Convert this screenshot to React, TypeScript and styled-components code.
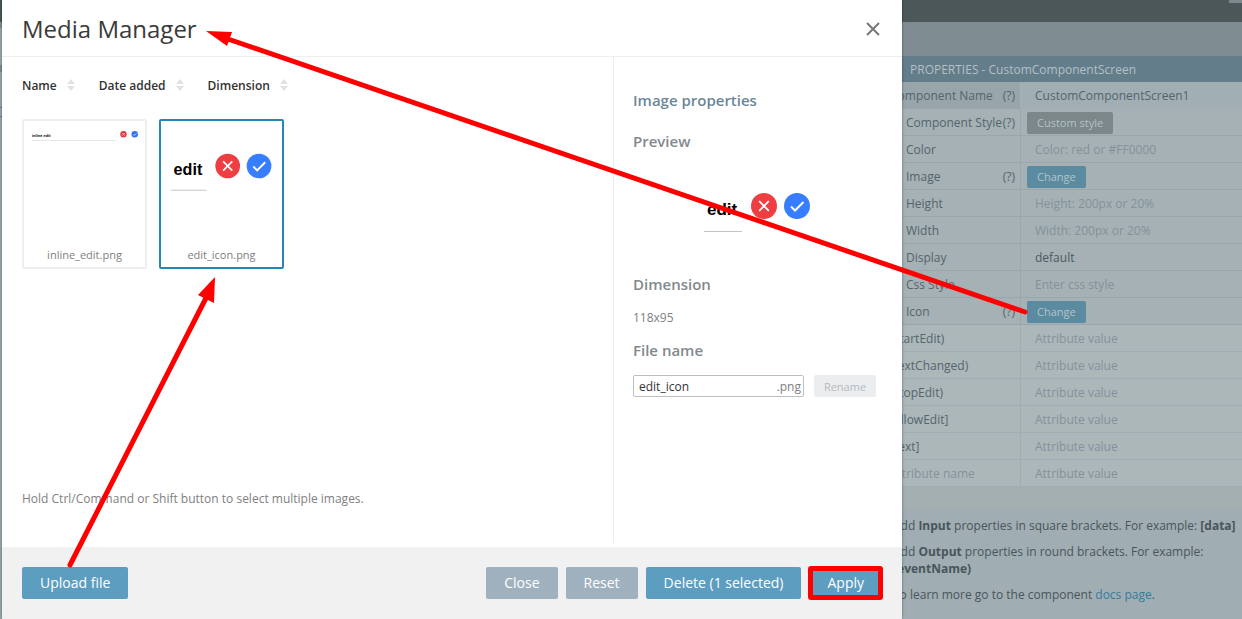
import React from "react";
import styled, { createGlobalStyle, css } from "styled-components";

const GlobalStyle = createGlobalStyle`
  *, *::before, *::after { box-sizing: border-box; }
  body {
    margin: 0;
    background: #a4afb2;
    color: #333;
    font-family: "Open Sans", "Noto Sans", sans-serif;
    font-size: 12px;
  }
  button, input, select { font-family: inherit; margin: 0; }
  h1, h2, h3, p { margin: 0; }
`;

const Page = styled.div`
  position: relative;
  display: flex;
  flex-direction: column;
  min-height: 100vh;
  overflow: hidden;
`;

const TopBar = styled.header`
  height: 22px;
  background: #4b5759;
  display: flex;
  justify-content: flex-end;
`;

const TopBarTab = styled.span`
  width: 13px;
  height: 3px;
  background: #7d898c;
`;

const Workspace = styled.div`
  flex: 1;
  display: flex;
`;

const Sidebar = styled.nav`
  width: 240px;
  padding-top: 6px;
  background: #7f8c91;
  display: flex;
  flex-direction: column;
  gap: 7px;
`;

const SidebarPanel = styled.div<{ $fill?: boolean }>`
  flex: ${(p) => (p.$fill ? "1" : "0 0 37px")};
  background: #9aa8ad;
`;

const SidebarActive = styled.div`
  height: 10px;
  margin-top: 35px;
  border: 1px solid #4f8199;
  border-width: 1px 0;
`;

const Stage = styled.main`
  flex: 1;
  display: flex;
  flex-direction: column;
`;

const SubBar = styled.div`
  height: 34px;
  background: #7f8c91;
`;

const Inspector = styled.aside`
  flex: 1;
  display: flex;
  flex-direction: column;
  width: 362px;
  margin-left: auto;
`;

const InspectorTitle = styled.h2`
  height: 26px;
  padding-left: 30px;
  background: #647d8b;
  color: #b3c0c5;
  font-size: 12px;
  font-weight: 400;
  line-height: 28px;
`;

const PropertyTable = styled.table`
  width: 100%;
  border-collapse: separate;
  border-spacing: 0;
  table-layout: fixed;
  background: #a5b1b4;
  color: #53656c;
  font-size: 12px;
`;

const NameCell = styled.th<{ $indent: number }>`
  width: 141px;
  padding: 2px 5px 0 ${(p) => p.$indent}px;
  border-right: 1px solid #99a7ac;
  border-bottom: 1px solid #99a7ac;
  font-weight: 400;
  text-align: left;
`;

const ValueCell = styled.td`
  padding: 0 6px;
  border-bottom: 1px solid #99a7ac;
`;

const PropertyRow = styled.tr<{ $tone?: "head" | "custom" }>`
  height: 27px;
  ${(p) =>
    p.$tone === "head" &&
    css`
      background: #a1aeb3;
      ${NameCell} { background: #98a6ab; border-color: #a5b1b4; border-bottom-color: #98a6ab; }
      ${ValueCell} { border-color: #a1aeb3; }
    `}
  ${(p) =>
    p.$tone === "custom" &&
    css`
      background: #acb7ba;
      ${NameCell}, ${ValueCell} { border-color: #a1adb1; }
    `}
`;

const NameLine = styled.div<{ $muted?: boolean }>`
  display: flex;
  justify-content: space-between;
  line-height: 20px;
  white-space: nowrap;
  color: ${(p) => (p.$muted ? "#83929a" : "inherit")};
`;

const ValueInput = styled.input`
  display: block;
  width: 100%;
  height: 20px;
  padding: 0 8px;
  border: 0;
  outline: 0;
  background: transparent;
  color: #53656c;
  font-size: 12px;
  &::placeholder { color: #83929a; opacity: 1; }
`;

const ValueSelect = styled.select`
  display: block;
  width: 100%;
  height: 20px;
  padding: 0 8px;
  border: 0;
  appearance: none;
  background: transparent;
  color: #4a5a60;
  font-size: 12px;
`;

const SmallButton = styled.button<{ $grey?: boolean }>`
  display: block;
  height: 22px;
  margin-top: 2px;
  padding: 0 10px;
  border: 0;
  border-radius: 2px;
  background: ${(p) => (p.$grey ? "#7b8789" : "#5a8ba0")};
  color: #b5c3c8;
  font-size: 11px;
  line-height: 22px;
`;

const Notes = styled.div`
  flex: 1;
  display: flex;
  flex-direction: column;
  gap: 9px;
  margin-top: 20px;
  padding: 10px 0 0 13px;
  background: #a0adb2;
  color: #48565c;
  font-size: 12px;
  line-height: 17px;
`;

const DocsLink = styled.a`
  color: #377b9e;
  text-decoration: none;
`;

const Modal = styled.section`
  position: absolute;
  top: 0;
  bottom: 0;
  left: 2px;
  right: 340px;
  display: flex;
  flex-direction: column;
  background: #fff;
  border-radius: 0 0 2px 2px;
  box-shadow: 0 0 3px rgba(0, 0, 0, 0.4);
`;

const ModalHeader = styled.header`
  display: flex;
  align-items: center;
  justify-content: space-between;
  height: 57px;
  padding: 2px 22px 0 20px;
  border-bottom: 1px solid #eee;
`;

const ModalTitle = styled.h1`
  padding-bottom: 2px;
  color: #3a3a3a;
  font-size: 24px;
  font-weight: 400;
`;

const CloseIconButton = styled.button`
  display: flex;
  padding: 0;
  border: 0;
  background: none;
  color: #777;
`;

const ModalBody = styled.div`
  flex: 1;
  display: flex;
  padding-bottom: 4px;
`;

const Gallery = styled.div`
  flex: 1;
  display: flex;
  flex-direction: column;
  padding: 17px 20px 34px;
`;

const SortBar = styled.div`
  display: flex;
  gap: 24px;
`;

const SortButton = styled.button`
  display: flex;
  align-items: center;
  gap: 10px;
  height: 22px;
  padding: 0;
  border: 0;
  background: none;
  color: #333;
  font-size: 12px;
  font-weight: 600;
`;

const Files = styled.div`
  display: flex;
  gap: 12px;
  margin-top: 23px;
`;

const FileCard = styled.button<{ $selected?: boolean }>`
  display: flex;
  flex-direction: column;
  justify-content: space-between;
  align-items: center;
  width: 125px;
  height: 150px;
  padding: 0 0 4px;
  border: 2px solid ${(p) => (p.$selected ? "#2488b4" : "#eee")};
  border-radius: 2px;
  background: #fff;
  color: #808080;
  font-size: 11px;
  line-height: 16px;
`;

const Hint = styled.p`
  margin-top: auto;
  color: #808080;
  font-size: 12px;
  line-height: 20px;
`;

const Details = styled.div`
  width: 289px;
  padding: 33px 26px 0 19px;
  border-left: 1px solid #eee;
`;

const DetailsTitle = styled.h2`
  color: #6c8796;
  font-size: 15px;
  font-weight: 600;
  line-height: 20px;
`;

const DetailsHeading = styled.h3<{ $gap: number }>`
  margin-top: ${(p) => p.$gap}px;
  color: #82898d;
  font-size: 15px;
  font-weight: 600;
  line-height: 20px;
`;

const Preview = styled.div`
  display: flex;
  justify-content: center;
  height: 105px;
  margin-top: 18px;
  padding-left: 6px;
`;

const DimensionText = styled.p`
  margin-top: 14px;
  color: #808080;
  font-size: 12px;
  line-height: 20px;
`;

const RenameForm = styled.form`
  display: flex;
  gap: 10px;
  margin-top: 15px;
`;

const FileNameField = styled.label`
  display: flex;
  align-items: center;
  flex: 1;
  min-width: 0;
  height: 22px;
  padding: 0 2px 0 5px;
  border: 1px solid #b9c0c4;
  border-radius: 2px;
  color: #808080;
  font-size: 12px;
`;

const FileNameInput = styled.input`
  flex: 1;
  min-width: 0;
  height: 20px;
  padding: 0;
  border: 0;
  outline: 0;
  background: transparent;
  color: #333;
  font-size: 12px;
`;

const RenameButton = styled.button`
  flex: none;
  width: 62px;
  height: 22px;
  padding: 0;
  border: 0;
  border-radius: 2px;
  background: #ebedef;
  color: #b4bbc1;
  font-size: 11px;
`;

const ModalFooter = styled.footer`
  display: flex;
  gap: 8px;
  height: 72px;
  padding: 20px 20px 0;
  background: #f1f1f1;
`;

const FooterButton = styled.button<{ $muted?: boolean; $first?: boolean; $marked?: boolean }>`
  height: 32px;
  margin-right: ${(p) => (p.$first ? "auto" : "0")};
  padding: 0 18px;
  border: 0;
  border-radius: 2px;
  background: ${(p) => (p.$muted ? "#9fb1bf" : "#5c9dc0")};
  color: #fff;
  font-size: 14px;
  line-height: 32px;
  white-space: nowrap;
  ${(p) =>
    p.$marked &&
    css`
      outline: 5px solid #fe0000;
      outline-offset: -4px;
    `}
`;

const Arrows = styled.svg`
  position: absolute;
  top: 0;
  left: 0;
  pointer-events: none;
`;

const SortIcon = () => (
  <svg width="8" height="12" viewBox="0 0 8 12" aria-hidden="true">
    <path d="M0 5 L4 0 L8 5 Z M0 7 L4 12 L8 7 Z" fill="#e2e2e2" />
  </svg>
);

const EditDrawing = ({ width, height }: { width: number; height: number }) => (
  <svg width={width} height={height} viewBox="0 0 118 95" role="img" aria-label="edit icon">
    <text x="8" y="46" fontFamily="Liberation Sans, sans-serif" fontWeight="700" fontSize="17" fill="#000">
      edit
    </text>
    <path d="M5 62.5 H43" stroke="#c4c4c4" />
    <circle cx="65" cy="37" r="13" fill="#ee3e41" />
    <path d="M60.2 32.2 L69.8 41.8 M69.8 32.2 L60.2 41.8" stroke="#fff" strokeWidth="1.8" />
    <circle cx="98" cy="37" r="13" fill="#377dff" />
    <path d="M92 37.5 L96 41.5 L104.5 33" stroke="#fff" strokeWidth="2" fill="none" />
  </svg>
);

const InlineEditDrawing = () => (
  <svg width="121" height="40" viewBox="0 0 121 40" role="img" aria-label="inline edit">
    <text x="8" y="16" fontFamily="Liberation Sans, sans-serif" fontWeight="700" fontSize="4" fill="#000">
      inline edit
    </text>
    <path d="M8 19.5 H92" stroke="#e6e6e6" />
    <circle cx="99.5" cy="13.3" r="3.2" fill="#e23a3d" />
    <path d="M98.3 12.1 L100.7 14.5 M100.7 12.1 L98.3 14.5" stroke="#fff" strokeWidth="0.7" />
    <circle cx="110.7" cy="13.3" r="3.2" fill="#3073ee" />
    <path d="M109.2 13.4 L110.3 14.5 L112.3 12.4" stroke="#fff" strokeWidth="0.7" fill="none" />
  </svg>
);

type Property = {
  name: string;
  indent?: number;
  help?: boolean;
  value?: string;
  placeholder?: string;
  button?: string;
  select?: boolean;
  tone?: "head" | "custom";
  muted?: boolean;
};

const properties: Property[] = [
  { name: "Component Name", indent: 10, help: true, value: "CustomComponentScreen1", tone: "head" },
  { name: "Component Style", help: true, button: "Custom style" },
  { name: "Color", placeholder: "Color: red or #FF0000" },
  { name: "Image", help: true, button: "Change" },
  { name: "Height", placeholder: "Height: 200px or 20%" },
  { name: "Width", placeholder: "Width: 200px or 20%" },
  { name: "Display", value: "default", select: true },
  { name: "Css Style", placeholder: "Enter css style" },
  { name: "Icon", help: true, button: "Change" },
  { name: "(startEdit)", indent: 10, tone: "custom", placeholder: "Attribute value" },
  { name: "(textChanged)", indent: 10, tone: "custom", placeholder: "Attribute value" },
  { name: "(stopEdit)", indent: 10, tone: "custom", placeholder: "Attribute value" },
  { name: "[allowEdit]", indent: 10, tone: "custom", placeholder: "Attribute value" },
  { name: "[text]", indent: 10, tone: "custom", placeholder: "Attribute value" },
  { name: "Attribute name", indent: 10, tone: "custom", placeholder: "Attribute value", muted: true },
];

const PropertyValue = ({ item }: { item: Property }) => {
  if (item.button) return <SmallButton $grey={item.button !== "Change"}>{item.button}</SmallButton>;
  if (item.select)
    return (
      <ValueSelect aria-label={item.name}>
        <option>{item.value}</option>
      </ValueSelect>
    );
  return <ValueInput aria-label={item.name} defaultValue={item.value} placeholder={item.placeholder} />;
};

export default function App() {
  return (
    <>
      <GlobalStyle />
      <Page>
        <TopBar>
          <TopBarTab />
        </TopBar>
        <Workspace>
          <Sidebar>
            <SidebarPanel />
            <SidebarPanel $fill>
              <SidebarActive />
            </SidebarPanel>
          </Sidebar>
          <Stage>
            <SubBar />
            <Inspector>
              <InspectorTitle>PROPERTIES - CustomComponentScreen</InspectorTitle>
              <PropertyTable>
                <tbody>
                  {properties.map((item) => (
                    <PropertyRow key={item.name} $tone={item.tone}>
                      <NameCell scope="row" $indent={item.indent ?? 26}>
                        <NameLine $muted={item.muted}>
                          <span>{item.name}</span>
                          {item.help && <span>(?)</span>}
                        </NameLine>
                      </NameCell>
                      <ValueCell>
                        <PropertyValue item={item} />
                      </ValueCell>
                    </PropertyRow>
                  ))}
                </tbody>
              </PropertyTable>
              <Notes>
                <p>
                  Add <b>Input</b> properties in square brackets. For example: <b>[data]</b>
                </p>
                <p>
                  Add <b>Output</b> properties in round brackets. For example: <b>(eventName)</b>
                </p>
                <p>
                  To learn more go to the component <DocsLink href="#docs">docs page</DocsLink>.
                </p>
              </Notes>
            </Inspector>
          </Stage>
        </Workspace>

        <Modal role="dialog" aria-labelledby="media-title">
          <ModalHeader>
            <ModalTitle id="media-title">Media Manager</ModalTitle>
            <CloseIconButton aria-label="Close dialog">
              <svg width="14" height="14" viewBox="0 0 14 14">
                <path d="M1 1 L13 13 M13 1 L1 13" stroke="currentColor" strokeWidth="2" />
              </svg>
            </CloseIconButton>
          </ModalHeader>
          <ModalBody>
            <Gallery>
              <SortBar>
                <SortButton>Name <SortIcon /></SortButton>
                <SortButton>Date added <SortIcon /></SortButton>
                <SortButton>Dimension <SortIcon /></SortButton>
              </SortBar>
              <Files>
                <FileCard>
                  <InlineEditDrawing />
                  <span>inline_edit.png</span>
                </FileCard>
                <FileCard $selected>
                  <EditDrawing width={112} height={110} />
                  <span>edit_icon.png</span>
                </FileCard>
              </Files>
              <Hint>Hold Ctrl/Command or Shift button to select multiple images.</Hint>
            </Gallery>
            <Details>
              <DetailsTitle>Image properties</DetailsTitle>
              <DetailsHeading $gap={21}>Preview</DetailsHeading>
              <Preview>
                <EditDrawing width={118} height={95} />
              </Preview>
              <DetailsHeading $gap={0}>Dimension</DetailsHeading>
              <DimensionText>118x95</DimensionText>
              <DetailsHeading $gap={12}>File name</DetailsHeading>
              <RenameForm>
                <FileNameField>
                  <FileNameInput defaultValue="edit_icon" aria-label="File name" />
                  .png
                </FileNameField>
                <RenameButton type="button" disabled>Rename</RenameButton>
              </RenameForm>
            </Details>
          </ModalBody>
          <ModalFooter>
            <FooterButton $first>Upload file</FooterButton>
            <FooterButton $muted>Close</FooterButton>
            <FooterButton $muted>Reset</FooterButton>
            <FooterButton>Delete (1 selected)</FooterButton>
            <FooterButton $marked>Apply</FooterButton>
          </ModalFooter>
        </Modal>

        <Arrows width="1242" height="619" viewBox="0 0 1242 619" aria-hidden="true">
          <g stroke="#fe0000" strokeWidth="5" strokeLinecap="round">
            <path d="M1025 312 L225 38" />
            <path d="M70 565 L207 296" />
          </g>
          <path d="M206 31 L232 32 L227 46 Z" fill="#fe0000" />
          <path d="M215 277 L214 303 L198 295 Z" fill="#fe0000" />
        </Arrows>
      </Page>
    </>
  );
}
